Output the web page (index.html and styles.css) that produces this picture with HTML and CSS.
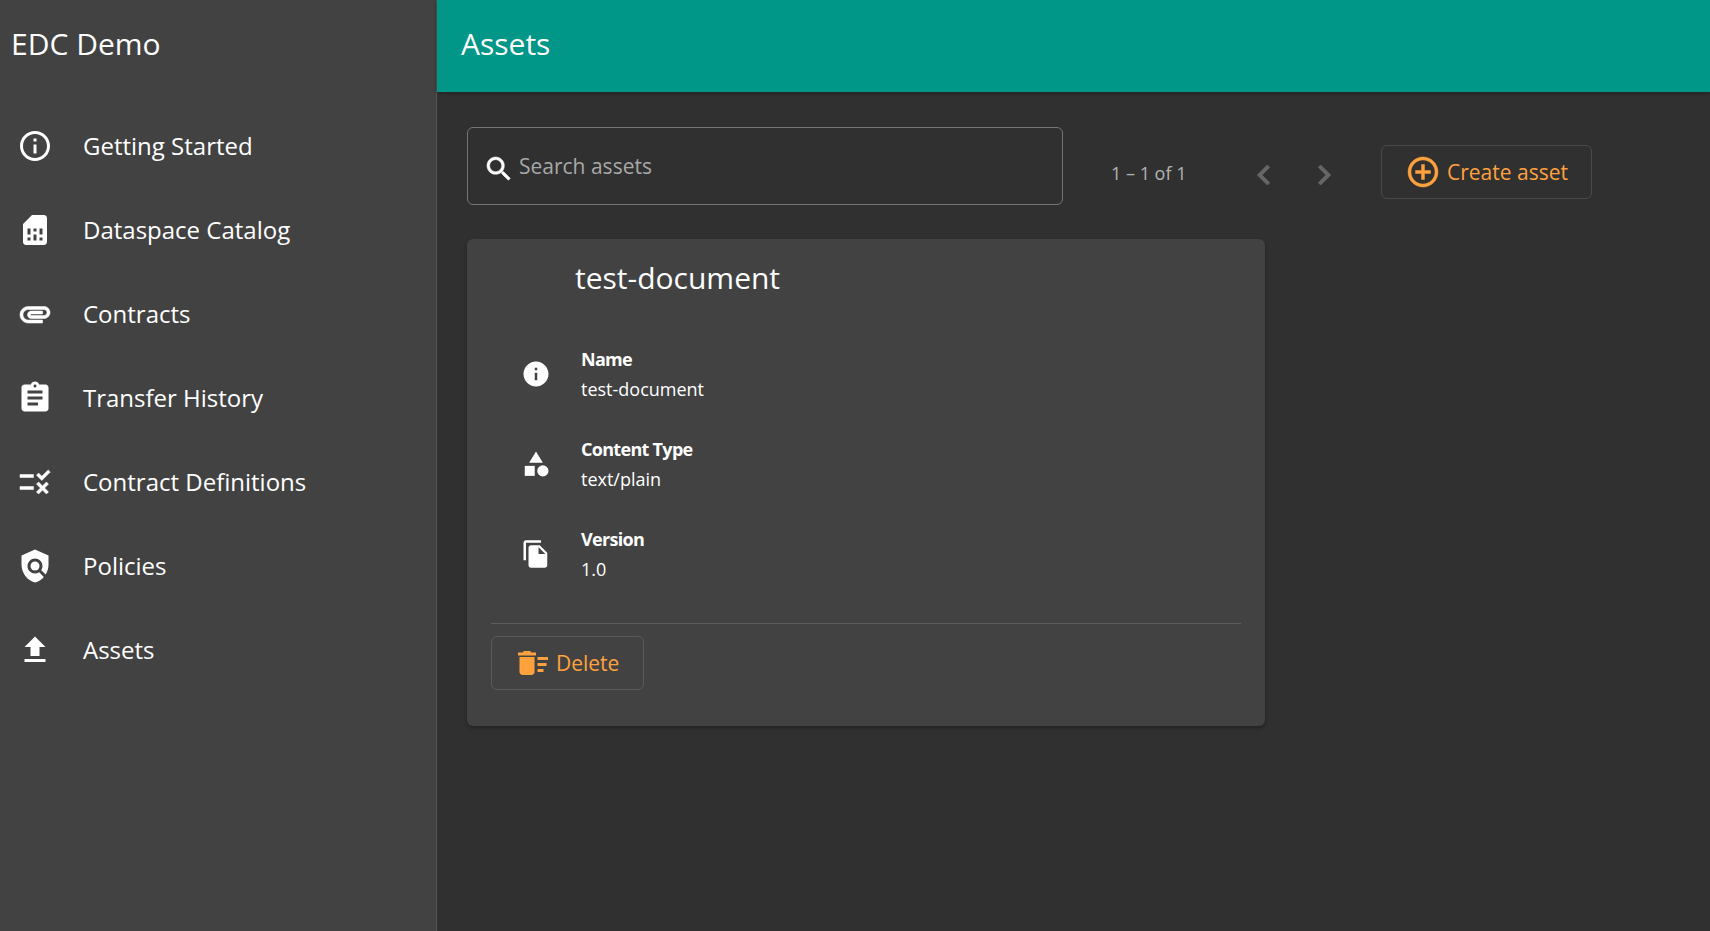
FILE: index.html
```html
<!DOCTYPE html>
<html>
<head>
    <title>EDC Demo</title>
    <link rel="stylesheet" href="styles.css">
</head>
<body>
    <div class="sidebar">
        <div class="brand">EDC Demo</div>
        <nav class="nav">
            <a class="nav-item">
                <svg class="nav-icon" viewBox="0 0 24 24"><path d="M11 7h2v2h-2zm0 4h2v6h-2zm1-9C6.48 2 2 6.48 2 12s4.48 10 10 10 10-4.48 10-10S17.52 2 12 2zm0 18c-4.41 0-8-3.59-8-8s3.59-8 8-8 8 3.59 8 8-3.59 8-8 8z"/></svg>
                Getting Started
            </a>
            <a class="nav-item">
                <svg class="nav-icon" viewBox="0 0 24 24"><path d="M19.99 4c0-1.1-.89-2-1.99-2h-8L4 8v12c0 1.1.9 2 2 2h12c1.1 0 2-.9 2-2l-.01-16zM9 19H7v-2h2v2zm8 0h-2v-2h2v2zm-8-4H7v-4h2v4zm4 4h-2v-4h2v4zm0-6h-2v-2h2v2zm4 2h-2v-4h2v4z"/></svg>
                Dataspace Catalog
            </a>
            <a class="nav-item">
                <svg class="nav-icon nav-icon-bold" viewBox="0 0 24 24"><path d="M2 12.5C2 9.46 4.46 7 7.5 7H18c2.21 0 4 1.79 4 4s-1.79 4-4 4H9.5C8.12 15 7 13.88 7 12.5S8.12 10 9.5 10H17v2H9.41c-.55 0-.55 1 0 1H18c1.1 0 2-.9 2-2s-.9-2-2-2H7.5C5.57 9 4 10.57 4 12.5S5.57 16 7.5 16H17v2H7.5C4.46 18 2 15.54 2 12.5z"/></svg>
                Contracts
            </a>
            <a class="nav-item">
                <svg class="nav-icon" viewBox="0 0 24 24"><path d="M19 3h-4.18C14.4 1.84 13.3 1 12 1c-1.3 0-2.4.84-2.82 2H5c-1.1 0-2 .9-2 2v14c0 1.1.9 2 2 2h14c1.1 0 2-.9 2-2V5c0-1.1-.9-2-2-2zm-7 0c.55 0 1 .45 1 1s-.45 1-1 1-1-.45-1-1 .45-1 1-1zm2 14H7v-2h7v2zm3-4H7v-2h10v2zm0-4H7V7h10v2z"/></svg>
                Transfer History
            </a>
            <a class="nav-item">
                <svg class="nav-icon nav-icon-bold" viewBox="0 0 24 24"><path d="M16.54 11 13 7.46l1.41-1.41 2.12 2.12 4.24-4.24 1.41 1.41L16.54 11zM11 7H2v2h9V7zm10 6.41L19.59 12 17 14.59 14.41 12 13 13.41 15.59 16 13 18.59 14.41 20 17 17.41 19.59 20 21 18.59 18.41 16 21 13.41zM11 15H2v2h9v-2z"/></svg>
                Contract Definitions
            </a>
            <a class="nav-item">
                <svg class="nav-icon" viewBox="0 0 24 24"><path d="M21 5l-9-4-9 4v6c0 5.55 3.84 10.74 9 12 2.3-.56 4.33-1.9 5.88-3.71l-3.12-3.12c-1.94 1.29-4.58 1.07-6.29-.64-1.95-1.95-1.95-5.12 0-7.07 1.95-1.95 5.12-1.95 7.07 0 1.71 1.71 1.92 4.35.64 6.29l2.9 2.9C20.29 15.69 21 13.38 21 11V5z"/><circle cx="12" cy="12" r="3"/></svg>
                Policies
            </a>
            <a class="nav-item">
                <svg class="nav-icon" viewBox="0 0 24 24"><path d="M5 20h14v-2H5v2zm0-10h4v6h6v-6h4l-7-7-7 7z"/></svg>
                Assets
            </a>
        </nav>
    </div>

    <div class="main">
        <header class="topbar">Assets</header>

        <div class="content">
            <div class="toolbar">
                <div class="search">
                    <svg class="search-icon" viewBox="0 0 24 24"><path d="M15.5 14h-.79l-.28-.27C15.41 12.59 16 11.11 16 9.5 16 5.91 13.09 3 9.5 3S3 5.91 3 9.5 5.91 16 9.5 16c1.61 0 3.09-.59 4.23-1.57l.27.28v.79l5 4.99L20.49 19l-4.99-5zm-6 0C7.01 14 5 11.99 5 9.5S7.01 5 9.5 5 14 7.01 14 9.5 11.99 14 9.5 14z"/></svg>
                    <span class="search-text">Search assets</span>
                </div>
                <div class="paginator">
                    <span class="range">1 – 1 of 1</span>
                    <svg class="chevron" viewBox="0 0 24 24"><path d="M15.41 7.41L14 6l-6 6 6 6 1.41-1.41L10.83 12z"/></svg>
                    <svg class="chevron" viewBox="0 0 24 24"><path d="M10 6L8.59 7.41 13.17 12l-4.58 4.59L10 18l6-6z"/></svg>
                </div>
                <a class="btn btn-create">
                    <svg class="btn-icon" viewBox="0 0 24 24"><path d="M13 7h-2v4H7v2h4v4h2v-4h4v-2h-4V7zm-1-5C6.49 2 2 6.49 2 12s4.49 10 10 10 10-4.49 10-10S17.51 2 12 2zm0 18c-4.41 0-8-3.59-8-8s3.59-8 8-8 8 3.59 8 8-3.59 8-8 8z"/></svg>
                    Create asset
                </a>
            </div>

            <div class="card">
                <h2 class="card-title">test-document</h2>

                <div class="prop">
                    <svg class="prop-icon" viewBox="0 0 24 24"><path d="M12 2C6.48 2 2 6.48 2 12s4.48 10 10 10 10-4.48 10-10S17.52 2 12 2zm1 15h-2v-6h2v6zm0-8h-2V7h2v2z"/></svg>
                    <div class="prop-text">
                        <div class="prop-label">Name</div>
                        <div class="prop-value">test-document</div>
                    </div>
                </div>
                <div class="prop">
                    <svg class="prop-icon" viewBox="0 0 24 24"><path d="M12 2l-5.5 9h11z"/><circle cx="17.5" cy="17.5" r="4.5"/><path d="M3 13.5h8v8H3z"/></svg>
                    <div class="prop-text">
                        <div class="prop-label">Content Type</div>
                        <div class="prop-value">text/plain</div>
                    </div>
                </div>
                <div class="prop">
                    <svg class="prop-icon" viewBox="0 0 24 24"><path d="M16 1H4c-1.1 0-2 .9-2 2v14h2V3h12V1zm-1 4l6 6v10c0 1.1-.9 2-2 2H7.99C6.89 23 6 22.1 6 21l.01-14c0-1.1.89-2 1.99-2h7zm-1 7h5.5L14 6.5V12z"/></svg>
                    <div class="prop-text">
                        <div class="prop-label">Version</div>
                        <div class="prop-value">1.0</div>
                    </div>
                </div>

                <div class="card-actions">
                    <a class="btn btn-delete">
                        <svg class="btn-icon" viewBox="0 0 24 24"><path d="M15 16h4v2h-4zm0-8h7v2h-7zm0 4h6v2h-6zM3 18c0 1.1.9 2 2 2h6c1.1 0 2-.9 2-2V8H3v10zM14 5h-3l-1-1H6L5 5H2v2h12z"/></svg>
                        Delete
                    </a>
                </div>
            </div>
        </div>
    </div>
</body>
</html>
```

FILE: styles.css
```css
* {
    box-sizing: border-box;
}

body {
    font-family: 'Open Sans', sans-serif;
    margin: 0;
    height: 100vh;
    display: flex;
    overflow: hidden;
    background: #303030;
    color: #fff;
}

.sidebar {
    width: 437px;
    flex-shrink: 0;
    background: #424242;
    border-right: 1px solid #555;
}

.brand {
    height: 92px;
    padding-left: 11px;
    display: flex;
    align-items: center;
    font-size: 30px;
    padding-bottom: 6px;
}

.nav {
    padding-top: 11px;
}

.nav-item {
    height: 84px;
    display: flex;
    align-items: center;
    font-size: 24px;
    padding-left: 17px;
}

.nav-icon {
    width: 36px;
    height: 36px;
    fill: #fff;
    margin-right: 30px;
    margin-top: 2px;
    flex-shrink: 0;
}

/* thin strokes come out too light at this size */
.nav-icon-bold {
    stroke: #fff;
    stroke-width: 0.35;
}

.main {
    flex: 1;
    min-width: 0;
}

.topbar {
    height: 92px;
    background: #009688;
    display: flex;
    align-items: center;
    padding: 0 0 6px 24px;
    font-size: 30px;
    box-shadow: 0 1px 4px rgba(0, 0, 0, 0.35);
}

.content {
    padding: 35px 30px;
}

.toolbar {
    display: flex;
    align-items: center;
}

.search {
    width: 596px;
    height: 78px;
    border: 1px solid #757575;
    border-radius: 6px;
    display: flex;
    align-items: center;
    padding-left: 15px;
}

.search-icon {
    width: 32px;
    height: 32px;
    fill: #fff;
    stroke: #fff;
    stroke-width: 0.4;
    margin-right: 4px;
    margin-top: 5px;
}

.search-text {
    font-size: 21px;
    color: #a8a8a8;
}

.paginator {
    display: flex;
    align-items: center;
    margin-left: 48px;
    width: 270px;
    margin-top: 13px;
}

.range {
    font-size: 18px;
    color: #b3b3b3;
    width: 133px;
}

.chevron {
    width: 40px;
    height: 40px;
    fill: #666;
    stroke: #666;
    stroke-width: 0.5;
    margin-right: 20px;
    margin-top: 4px;
}

.btn {
    display: flex;
    align-items: center;
    border: 1px solid #555;
    border-radius: 6px;
    color: #ffa23d;
    font-size: 21px;
    height: 54px;
}

.btn-create {
    width: 211px;
    padding-left: 25px;
    margin-top: 11px;
    border-color: #4a4a4a;
}

.btn-delete {
    width: 153px;
    padding-left: 23px;
    border-color: #5a5a5a;
}

.btn-icon {
    width: 36px;
    height: 36px;
    fill: #ffa23d;
    margin-right: 5px;
    flex-shrink: 0;
}

.btn-create .btn-icon {
    margin-left: -2px;
    margin-right: 6px;
    stroke: #ffa23d;
    stroke-width: 0.3;
}

.card {
    width: 798px;
    height: 487px;
    margin-top: 34px;
    background: #424242;
    border-radius: 6px;
    padding: 0 24px;
    box-shadow: 0 2px 4px rgba(0, 0, 0, 0.3);
}

.card-title {
    margin: 0;
    padding: 18px 0 0 84px;
    height: 90px;
    font-size: 30px;
    font-weight: 400;
}

.prop {
    height: 90px;
    display: flex;
    align-items: center;
}

.prop-icon {
    width: 30px;
    height: 30px;
    fill: #fff;
    margin-left: 30px;
    margin-right: 30px;
    flex-shrink: 0;
}

.prop-text {
    height: 58px;
}

.prop-label {
    font-size: 18px;
    font-weight: 700;
    letter-spacing: -0.7px;
    line-height: 29px;
}

.prop-value {
    font-size: 18px;
    line-height: 31px;
}

.card-actions {
    margin-top: 24px;
    border-top: 1px solid #5c5c5c;
    padding-top: 12px;
}
```
